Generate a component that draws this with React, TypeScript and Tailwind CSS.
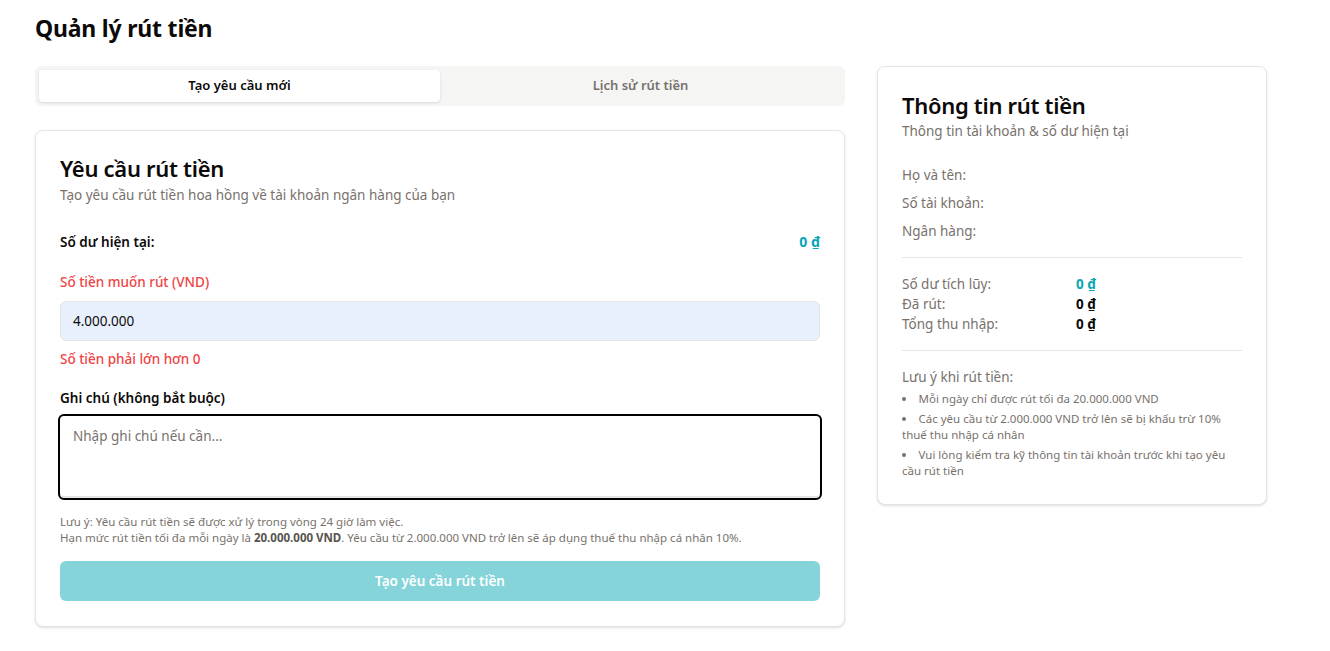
import React from "react";

export default function App() {
  return (
    <div
      className="min-h-[651px] bg-white text-[#0c0a09]"
      style={{ fontFamily: '"Noto Sans", "Open Sans", sans-serif' }}
    >
      <div className="pl-[35px] pt-[12px]">
        <h1 className="text-[23px] font-bold leading-[32px] tracking-[-0.2px]">Quản lý rút tiền</h1>
        <div className="mt-[22px] flex items-start gap-[32px]">
          {/* Left column */}
          <div className="w-[810px]">
            <div className="flex h-[40px] rounded-md bg-[#f5f5f4] p-[4px]">
              <div className="flex flex-1 items-center justify-center rounded-[4px] bg-white text-[13px] font-semibold shadow-sm">
                Tạo yêu cầu mới
              </div>
              <div className="flex flex-1 items-center justify-center text-[13px] font-semibold text-[#78716c]">
                Lịch sử rút tiền
              </div>
            </div>

            <div className="mt-[24px] rounded-lg border border-[#e7e5e4] bg-white px-[24px] pb-[25px] pt-[22px] shadow-sm">
              <h2 className="text-[22px] font-semibold leading-[30px] tracking-[-0.3px]">Yêu cầu rút tiền</h2>
              <p className="mt-[2px] text-[13.5px] leading-[20px] text-[#78716c]">
                Tạo yêu cầu rút tiền hoa hồng về tài khoản ngân hàng của bạn
              </p>

              <div className="mt-[26px] flex items-center justify-between">
                <span className="text-[13.5px] font-semibold leading-[20px]">Số dư hiện tại:</span>
                <span className="text-[14px] font-bold text-[#0aa6b5]">
                  0 <span className="underline">₫</span>
                </span>
              </div>

              <div className="mt-[20px] text-[13.5px] font-medium leading-[20px] text-[#ef4444]">
                Số tiền muốn rút (VND)
              </div>
              <div className="mt-[9px] flex h-[40px] items-center rounded-md border border-[#e7e5e4] bg-[#e8f0fe] px-[12px] text-[13.5px]">
                4.000.000
              </div>
              <div className="mt-[8px] text-[13.5px] font-medium leading-[20px] text-[#ef4444]">
                Số tiền phải lớn hơn 0
              </div>

              <div className="mt-[19px] text-[13.5px] font-semibold leading-[20px]">Ghi chú (không bắt buộc)</div>
              <div className="mt-[6px] -mx-[2px] h-[86px] rounded-md border-2 border-black px-[13px] py-[10px] text-[13.5px] text-[#78716c] shadow-[inset_0_-2px_0_#e5e5e5]">
                Nhập ghi chú nếu cần...
              </div>

              <div className="mt-[14px] text-[11.5px] leading-[16px] text-[#78716c]">
                <div>Lưu ý: Yêu cầu rút tiền sẽ được xử lý trong vòng 24 giờ làm việc.</div>
                <div>
                  Hạn mức rút tiền tối đa mỗi ngày là <span className="font-bold text-[#57534e]">20.000.000 VND</span>. Yêu cầu từ 2.000.000 VND trở lên sẽ áp dụng thuế thu nhập cá nhân 10%.
                </div>
              </div>

              <div className="mt-[15px] flex h-[40px] items-center justify-center rounded-md bg-[#84d4da] text-[13.5px] font-semibold text-white">
                Tạo yêu cầu rút tiền
              </div>
            </div>
          </div>

          {/* Right column */}
          <div className="w-[390px] rounded-lg border border-[#e7e5e4] bg-white px-[24px] pb-[25px] pt-[23px] shadow-sm">
            <h2 className="text-[22px] font-semibold leading-[30px] tracking-[-0.3px]">Thông tin rút tiền</h2>
            <p className="mt-[1px] text-[13.5px] leading-[20px] text-[#78716c]">Thông tin tài khoản &amp; số dư hiện tại</p>

            <div className="mt-[24px] flex flex-col gap-[8px] text-[13.5px] leading-[20px] text-[#78716c]">
              <div>Họ và tên:</div>
              <div>Số tài khoản:</div>
              <div>Ngân hàng:</div>
            </div>

            <div className="mt-[16px] h-px bg-[#e7e5e4]" />

            <div className="mt-[16px] flex flex-col text-[13.5px] leading-[20px]">
              <div className="flex">
                <span className="w-[174px] text-[#78716c]">Số dư tích lũy:</span>
                <span className="font-bold text-[#0aa6b5]">
                  0 <span className="underline">₫</span>
                </span>
              </div>
              <div className="flex">
                <span className="w-[174px] text-[#78716c]">Đã rút:</span>
                <span className="font-bold">
                  0 <span className="underline">₫</span>
                </span>
              </div>
              <div className="flex">
                <span className="w-[174px] text-[#78716c]">Tổng thu nhập:</span>
                <span className="font-bold">
                  0 <span className="underline">₫</span>
                </span>
              </div>
            </div>

            <div className="mt-[16px] h-px bg-[#e7e5e4]" />

            <div className="mt-[16px] text-[13.5px] leading-[20px] text-[#78716c]">Lưu ý khi rút tiền:</div>
            <ul className="mt-[4px] list-inside list-disc pr-[10px] text-[11.5px] leading-[16px] text-[#78716c]">
              <li className="mb-[4px]">Mỗi ngày chỉ được rút tối đa 20.000.000 VND</li>
              <li className="mb-[4px]">Các yêu cầu từ 2.000.000 VND trở lên sẽ bị khấu trừ 10% thuế thu nhập cá nhân</li>
              <li>Vui lòng kiểm tra kỹ thông tin tài khoản trước khi tạo yêu cầu rút tiền</li>
            </ul>
          </div>
        </div>
      </div>
    </div>
  );
}
